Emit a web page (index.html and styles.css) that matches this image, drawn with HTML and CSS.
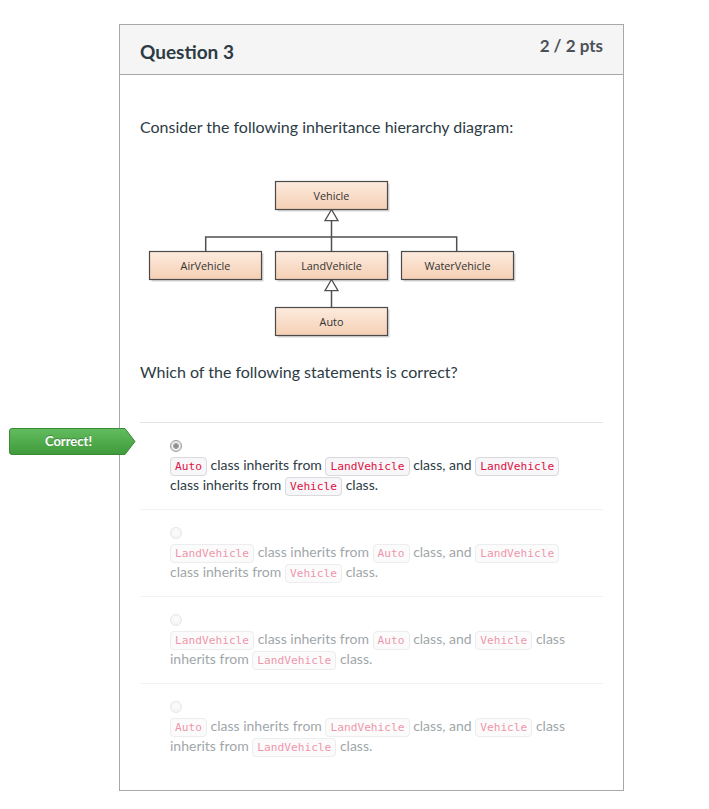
FILE: index.html
```html
<!DOCTYPE html>
<html lang="en">
<head>
<meta charset="utf-8">
<title>Question 3</title>
<link rel="stylesheet" href="styles.css">
</head>
<body>
<div class="page">
  <div class="card">
    <div class="card-header">
      <h2 class="q-title">Question 3</h2>
      <span class="q-points">2 / 2 pts</span>
    </div>
    <div class="card-body">
      <p class="q-text">Consider the following inheritance hierarchy diagram:</p>
      <svg class="diagram" width="463" height="170" viewBox="0 0 463 170" xmlns="http://www.w3.org/2000/svg">
        <defs>
          <linearGradient id="boxfill" x1="0" y1="0" x2="0" y2="1">
            <stop offset="0" stop-color="#fdebde"/>
            <stop offset="1" stop-color="#f5cfb4"/>
          </linearGradient>
        </defs>
        <g fill="#d6d6d6">
          <rect x="137.5" y="9.5" width="112" height="28"/>
          <rect x="11.5" y="79.5" width="112" height="28"/>
          <rect x="137.5" y="79.5" width="112" height="28"/>
          <rect x="263.5" y="79.5" width="112" height="28"/>
          <rect x="137.5" y="135.5" width="112" height="28"/>
        </g>
        <g fill="none" stroke="#505050" stroke-width="1.5">
          <path d="M65.7 77.5 V63 H316.7 V77.5"/>
          <path d="M191.5 46.7 V77.5"/>
          <path d="M191.5 116.7 V133.5"/>
        </g>
        <g fill="#ffffff" stroke="#505050" stroke-width="1.3">
          <path d="M191.5 35.5 L185 46.7 L198 46.7 Z"/>
          <path d="M191.5 105.5 L185 116.7 L198 116.7 Z"/>
        </g>
        <g fill="url(#boxfill)" stroke="#4a4a4a" stroke-width="1.2">
          <rect x="135.5" y="7.5" width="112" height="28"/>
          <rect x="9.5" y="77.5" width="112" height="28"/>
          <rect x="135.5" y="77.5" width="112" height="28"/>
          <rect x="261.5" y="77.5" width="112" height="28"/>
          <rect x="135.5" y="133.5" width="112" height="28"/>
        </g>
        <g class="node-label" text-anchor="middle" fill="#333333">
          <text x="191.5" y="25.5">Vehicle</text>
          <text x="65.5" y="95.5">AirVehicle</text>
          <text x="191.5" y="95.5">LandVehicle</text>
          <text x="317.5" y="95.5">WaterVehicle</text>
          <text x="191.5" y="151.5">Auto</text>
        </g>
      </svg>
      <p class="q-text q-ask">Which of the following statements is correct?</p>

      <div class="answers">
        <div class="answer selected">
          <div class="correct-flag">
            <svg class="flag-shape" width="128" height="28" viewBox="0 0 128 28" xmlns="http://www.w3.org/2000/svg">
              <defs>
                <linearGradient id="flagfill" x1="0" y1="0" x2="0" y2="1">
                  <stop offset="0" stop-color="#63bd5e"/>
                  <stop offset="1" stop-color="#3f9a3c"/>
                </linearGradient>
              </defs>
              <path d="M3 0.5 H116 L126 13.5 L116 26.5 H3 Q0.5 26.5 0.5 24 V3 Q0.5 0.5 3 0.5 Z" fill="url(#flagfill)" stroke="#3a8a36" stroke-width="1"/>
            </svg>
            <span class="flag-text">Correct!</span>
          </div>
          <div class="radio checked"></div>
          <div class="answer-text"><code>Auto</code> class inherits from <code>LandVehicle</code> class, and <code>LandVehicle</code> class inherits from <code>Vehicle</code> class.</div>
        </div>
        <div class="answer dim">
          <div class="radio"></div>
          <div class="answer-text"><code>LandVehicle</code> class inherits from <code>Auto</code> class, and <code>LandVehicle</code> class inherits from <code>Vehicle</code> class.</div>
        </div>
        <div class="answer dim">
          <div class="radio"></div>
          <div class="answer-text"><code>LandVehicle</code> class inherits from <code>Auto</code> class, and <code>Vehicle</code> class inherits from <code>LandVehicle</code> class.</div>
        </div>
        <div class="answer dim">
          <div class="radio"></div>
          <div class="answer-text"><code>Auto</code> class inherits from <code>LandVehicle</code> class, and <code>Vehicle</code> class inherits from <code>LandVehicle</code> class.</div>
        </div>
      </div>
    </div>
  </div>
</div>
</body>
</html>
```

FILE: styles.css
```css
html, body {
  margin: 0;
  padding: 0;
  background: #ffffff;
}

body {
  font-family: Lato, "Open Sans", "Liberation Sans", sans-serif;
  color: #2d3b45;
}

.page {
  padding: 24px 0 0 119px;
}

.card {
  width: 503px;
  border: 1px solid #a8a8a8;
  background: #ffffff;
}

.card-header {
  display: flex;
  justify-content: space-between;
  align-items: flex-start;
  background: #f5f5f5;
  border-bottom: 1px solid #a8a8a8;
  padding: 12px 20px 10px 20px;
  height: 27px;
}

.q-title {
  margin: 0;
  font-size: 19px;
  line-height: 29px;
  font-weight: 700;
  color: #2d3b45;
}

.q-points {
  font-size: 17px;
  line-height: 20px;
  font-weight: 700;
  color: #4b5157;
  margin-top: -1px;
}

.card-body {
  padding: 41px 20px 20px 20px;
}

.q-text {
  margin: 0;
  font-size: 16px;
  line-height: 22px;
  color: #2d3b45;
}

.diagram {
  display: block;
  margin-top: 36px;
}

.node-label {
  font-family: "Open Sans", "DejaVu Sans", sans-serif;
  font-size: 10.8px;
}

.q-ask {
  margin-top: 17px;
}

.answers {
  margin-top: 39px;
}

.answer {
  position: relative;
  border-top: 1px solid #e3e6e8;
  padding: 17px 32px 14px 30px;
}

.answer.dim {
  opacity: 0.46;
}

.radio {
  width: 10px;
  height: 10px;
  border-radius: 50%;
  border: 1px solid #c8c8c8;
  background: radial-gradient(circle at 50% 40%, #fafafa 0, #e4e4e4 100%);
  margin-bottom: 3px;
}

.radio.checked {
  border-color: #9a9a9a;
  background: radial-gradient(circle, #7f7f7f 0, #a5a5a5 2.6px, #f2f2f2 3.3px, #e0e0e0 5px);
}

.answer-text {
  font-size: 14px;
  line-height: 20px;
}

code {
  font-family: "DejaVu Sans Mono", "Liberation Mono", monospace;
  font-size: 11.2px;
  line-height: 14px;
  color: #dd1144;
  background: #f7f7f9;
  border: 1px solid #d9d9de;
  border-radius: 4px;
  padding: 2px 4px;
}

.correct-flag {
  position: absolute;
  left: -131px;
  top: 5px;
  width: 128px;
  height: 28px;
}

.flag-shape {
  position: absolute;
  left: 0;
  top: 0;
}

.flag-text {
  position: absolute;
  left: 1px;
  top: 0;
  width: 117px;
  line-height: 27px;
  text-align: center;
  color: #ffffff;
  font-size: 13px;
  font-weight: 700;
  text-shadow: 0 -1px 0 rgba(0, 0, 0, 0.25);
}
```
